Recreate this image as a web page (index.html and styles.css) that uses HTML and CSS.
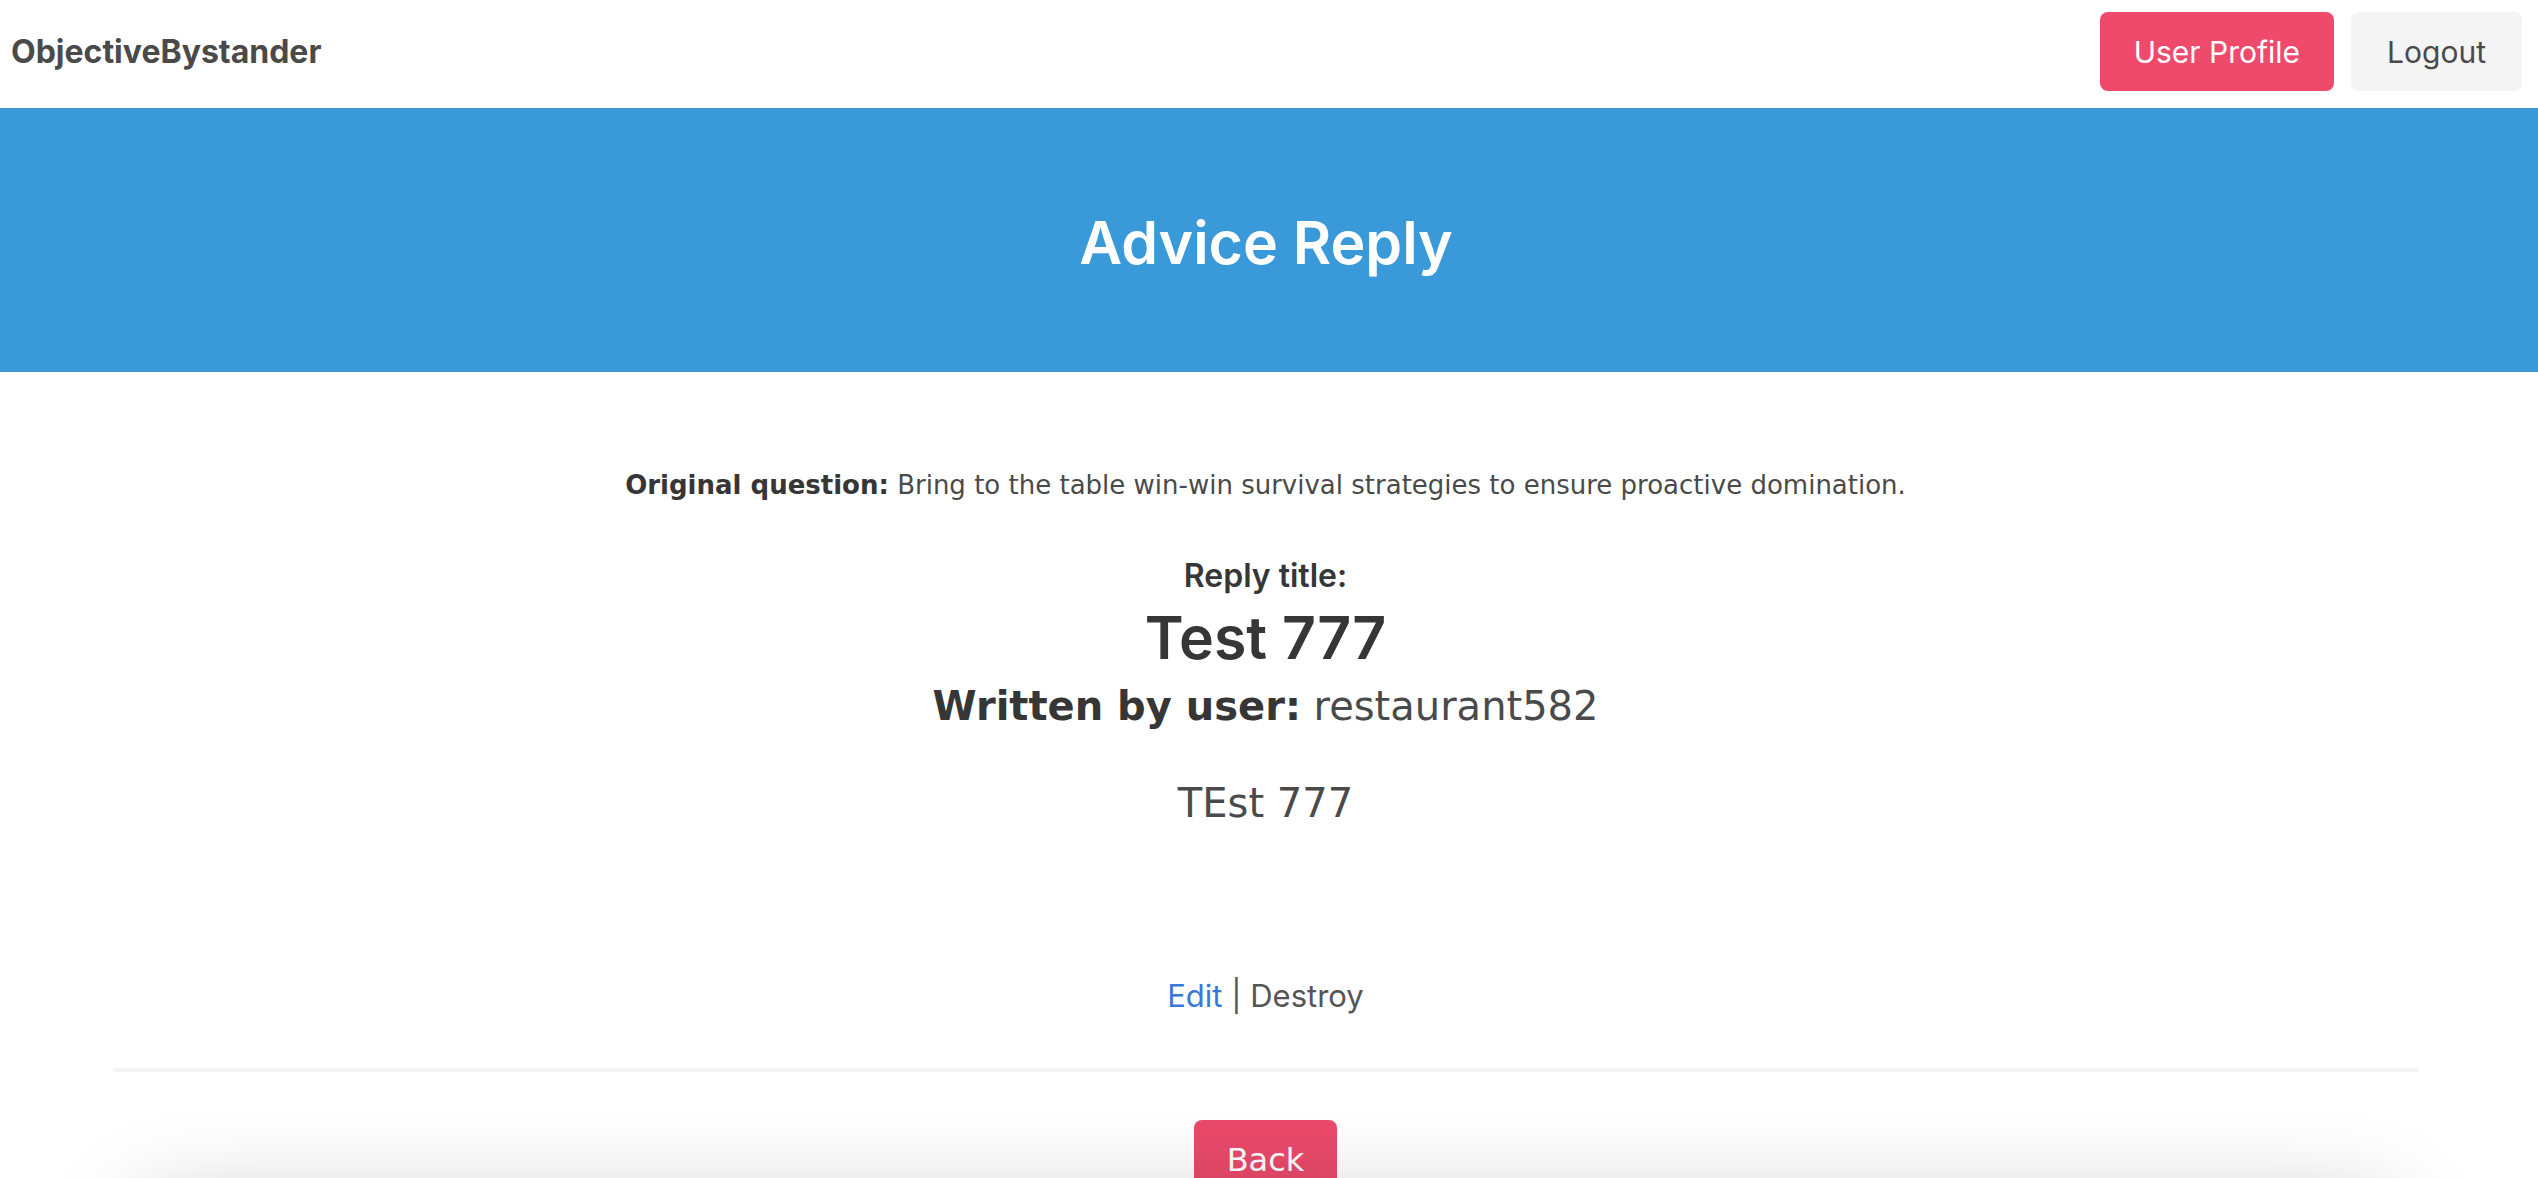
FILE: index.html
```html
<!DOCTYPE html>
<html lang="en">
<head>
<meta charset="utf-8">
<title>Advice Reply</title>
<link rel="stylesheet" href="styles.css">
</head>
<body>
<nav class="navbar">
  <a class="brand" href="#">ObjectiveBystander</a>
  <div class="nav-end">
    <a class="btn btn-danger" href="#">User Profile</a>
    <a class="btn btn-light" href="#">Logout</a>
  </div>
</nav>
<section class="hero">
  <h1 class="hero-title">Advice Reply</h1>
</section>
<main class="section">
  <p class="question"><strong>Original question:</strong> Bring to the table win-win survival strategies to ensure proactive domination.</p>
  <p class="label">Reply title:</p>
  <h2 class="reply-title">Test 777</h2>
  <p class="author"><strong>Written by user:</strong> restaurant582</p>
  <p class="reply-body">TEst 777</p>
  <p class="actions"><a class="link" href="#">Edit</a> | Destroy</p>
  <hr class="divider">
  <div class="back-row"><a class="btn btn-danger btn-back" href="#">Back</a></div>
  <div class="card-below"></div>
</main>
</body>
</html>
```

FILE: styles.css
```css
html, body {
  margin: 0;
  padding: 0;
  background: #ffffff;
}

body {
  font-family: Inter, "Noto Sans", sans-serif;
  color: #4a4a4a;
  overflow: hidden;
}

a {
  text-decoration: none;
}

.navbar {
  height: 108px;
  display: flex;
  justify-content: space-between;
  align-items: flex-start;
  padding: 0 16px 0 11px;
  box-sizing: border-box;
  background: #ffffff;
}

.brand {
  font-size: 32px;
  font-weight: 700;
  color: #4a4a4a;
  line-height: 104px;
}

.nav-end {
  display: flex;
  gap: 17px;
  padding-top: 12px;
}

.btn {
  display: inline-flex;
  align-items: center;
  justify-content: center;
  height: 79px;
  padding: 0 34px;
  box-sizing: border-box;
  border-radius: 8px;
  font-size: 30px;
  font-weight: 400;
}

.btn-danger {
  background: #ef4a6b;
  color: #ffffff;
}

.btn-light {
  background: #f4f4f4;
  color: #4a4a4a;
  padding: 0 36px;
}

.hero {
  height: 264px;
  background: #3a9ad9;
  display: flex;
  align-items: center;
  justify-content: center;
  padding: 6px 6px 0 0;
  box-sizing: border-box;
}

.hero-title {
  margin: 0;
  color: #ffffff;
  font-size: 59px;
  font-weight: 600;
  line-height: 1.2;
}

.section {
  padding: 94px 120px 0 113px;
  text-align: center;
}

.section p,
.section h2 {
  margin: 0;
}

.question {
  font-family: "DejaVu Sans", Verdana, sans-serif;
  font-size: 26px;
  line-height: 39px;
  color: #4a4a4a;
}

.question strong,
.author strong {
  color: #363636;
  font-weight: 700;
}

.label {
  margin-top: 47px !important;
  font-size: 32px;
  font-weight: 600;
  line-height: 48px;
  color: #363636;
}

.reply-title {
  font-size: 59px;
  font-weight: 600;
  line-height: 76px;
  color: #363636;
}

.author {
  font-family: "DejaVu Sans", Verdana, sans-serif;
  font-size: 40px;
  line-height: 60px;
  color: #4a4a4a;
}

.reply-body {
  margin-top: 37px !important;
  font-family: "DejaVu Sans", Verdana, sans-serif;
  font-size: 40px;
  line-height: 60px;
  color: #4a4a4a;
}

.actions {
  margin-top: 139px !important;
  font-size: 31px;
  line-height: 48px;
  color: #555555;
}

.link {
  color: #3878d8;
}

.divider {
  margin: 48px 0 0;
  height: 4px;
  border: none;
  background: #f3f3f3;
}

.back-row {
  margin-top: 48px;
}

.btn-back {
  height: 80px;
  padding: 0 33px;
  font-family: "DejaVu Sans", Verdana, sans-serif;
  font-size: 32px;
  background: #ea4a6b;
}

.card-below {
  position: relative;
  margin: 15px 32px 0;
  height: 300px;
  background: #ffffff;
  box-shadow: 0 0 100px rgba(0, 0, 0, 0.3);
}
```
